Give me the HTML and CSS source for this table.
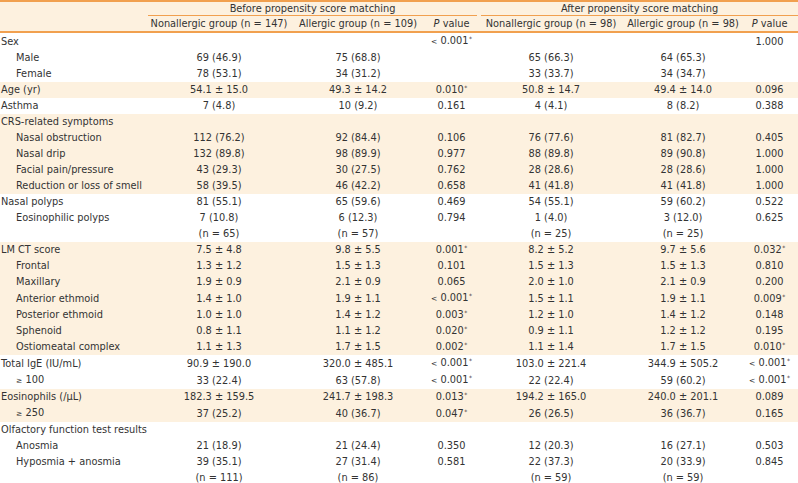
FILE: index.html
```html
<!DOCTYPE html>
<html>
<head>
<meta charset="utf-8">
<link rel="stylesheet" href="styles.css">
</head>
<body>
<table class="tbl">
  <colgroup>
    <col class="c-label"><col class="c-non"><col class="c-all"><col class="c-p">
    <col class="c-non2"><col class="c-all2"><col class="c-p2">
  </colgroup>
  <thead>
    <tr class="h1">
      <th class="corner" rowspan="2"></th>
      <th colspan="3"><div class="grp">Before propensity score matching</div></th>
      <th colspan="3"><div class="grp after">After propensity score matching</div></th>
    </tr>
    <tr class="h2">
      <th>Nonallergic group (n = 147)</th>
      <th>Allergic group (n = 109)</th>
      <th><i>P</i> value</th>
      <th>Nonallergic group (n = 98)</th>
      <th>Allergic group (n = 98)</th>
      <th><i>P</i> value</th>
    </tr>
  </thead>
  <tbody>
    <tr><td class="lb">Sex</td><td></td><td></td><td><span class="lt">&lt;</span> 0.001<sup>*</sup></td><td></td><td></td><td>1.000</td></tr>
    <tr><td class="lb in">Male</td><td>69 (46.9)</td><td>75 (68.8)</td><td></td><td>65 (66.3)</td><td>64 (65.3)</td><td></td></tr>
    <tr><td class="lb in">Female</td><td>78 (53.1)</td><td>34 (31.2)</td><td></td><td>33 (33.7)</td><td>34 (34.7)</td><td></td></tr>
    <tr class="hl"><td class="lb">Age (yr)</td><td>54.1 ± 15.0</td><td>49.3 ± 14.2</td><td>0.010<sup>*</sup></td><td>50.8 ± 14.7</td><td>49.4 ± 14.0</td><td>0.096</td></tr>
    <tr><td class="lb">Asthma</td><td>7 (4.8)</td><td>10 (9.2)</td><td>0.161</td><td>4 (4.1)</td><td>8 (8.2)</td><td>0.388</td></tr>
    <tr class="hl"><td class="lb">CRS-related symptoms</td><td></td><td></td><td></td><td></td><td></td><td></td></tr>
    <tr class="hl"><td class="lb in">Nasal obstruction</td><td>112 (76.2)</td><td>92 (84.4)</td><td>0.106</td><td>76 (77.6)</td><td>81 (82.7)</td><td>0.405</td></tr>
    <tr class="hl"><td class="lb in">Nasal drip</td><td>132 (89.8)</td><td>98 (89.9)</td><td>0.977</td><td>88 (89.8)</td><td>89 (90.8)</td><td>1.000</td></tr>
    <tr class="hl"><td class="lb in">Facial pain/pressure</td><td>43 (29.3)</td><td>30 (27.5)</td><td>0.762</td><td>28 (28.6)</td><td>28 (28.6)</td><td>1.000</td></tr>
    <tr class="hl"><td class="lb in">Reduction or loss of smell</td><td>58 (39.5)</td><td>46 (42.2)</td><td>0.658</td><td>41 (41.8)</td><td>41 (41.8)</td><td>1.000</td></tr>
    <tr><td class="lb">Nasal polyps</td><td>81 (55.1)</td><td>65 (59.6)</td><td>0.469</td><td>54 (55.1)</td><td>59 (60.2)</td><td>0.522</td></tr>
    <tr><td class="lb in">Eosinophilic polyps</td><td>7 (10.8)</td><td>6 (12.3)</td><td>0.794</td><td>1 (4.0)</td><td>3 (12.0)</td><td>0.625</td></tr>
    <tr><td class="lb"></td><td>(n = 65)</td><td>(n = 57)</td><td></td><td>(n = 25)</td><td>(n = 25)</td><td></td></tr>
    <tr class="hl"><td class="lb">LM CT score</td><td>7.5 ± 4.8</td><td>9.8 ± 5.5</td><td>0.001<sup>*</sup></td><td>8.2 ± 5.2</td><td>9.7 ± 5.6</td><td>0.032<sup>*</sup></td></tr>
    <tr class="hl"><td class="lb in">Frontal</td><td>1.3 ± 1.2</td><td>1.5 ± 1.3</td><td>0.101</td><td>1.5 ± 1.3</td><td>1.5 ± 1.3</td><td>0.810</td></tr>
    <tr class="hl"><td class="lb in">Maxillary</td><td>1.9 ± 0.9</td><td>2.1 ± 0.9</td><td>0.065</td><td>2.0 ± 1.0</td><td>2.1 ± 0.9</td><td>0.200</td></tr>
    <tr class="hl"><td class="lb in">Anterior ethmoid</td><td>1.4 ± 1.0</td><td>1.9 ± 1.1</td><td><span class="lt">&lt;</span> 0.001<sup>*</sup></td><td>1.5 ± 1.1</td><td>1.9 ± 1.1</td><td>0.009<sup>*</sup></td></tr>
    <tr class="hl"><td class="lb in">Posterior ethmoid</td><td>1.0 ± 1.0</td><td>1.4 ± 1.2</td><td>0.003<sup>*</sup></td><td>1.2 ± 1.0</td><td>1.4 ± 1.2</td><td>0.148</td></tr>
    <tr class="hl"><td class="lb in">Sphenoid</td><td>0.8 ± 1.1</td><td>1.1 ± 1.2</td><td>0.020<sup>*</sup></td><td>0.9 ± 1.1</td><td>1.2 ± 1.2</td><td>0.195</td></tr>
    <tr class="hl"><td class="lb in">Ostiomeatal complex</td><td>1.1 ± 1.3</td><td>1.7 ± 1.5</td><td>0.002<sup>*</sup></td><td>1.1 ± 1.4</td><td>1.7 ± 1.5</td><td>0.010<sup>*</sup></td></tr>
    <tr><td class="lb">Total IgE (IU/mL)</td><td>90.9 ± 190.0</td><td>320.0 ± 485.1</td><td><span class="lt">&lt;</span> 0.001<sup>*</sup></td><td>103.0 ± 221.4</td><td>344.9 ± 505.2</td><td><span class="lt">&lt;</span> 0.001<sup>*</sup></td></tr>
    <tr><td class="lb in"><span class="lt">≥</span> 100</td><td>33 (22.4)</td><td>63 (57.8)</td><td><span class="lt">&lt;</span> 0.001<sup>*</sup></td><td>22 (22.4)</td><td>59 (60.2)</td><td><span class="lt">&lt;</span> 0.001<sup>*</sup></td></tr>
    <tr class="hl"><td class="lb">Eosinophils (/μL)</td><td>182.3 ± 159.5</td><td>241.7 ± 198.3</td><td>0.013<sup>*</sup></td><td>194.2 ± 165.0</td><td>240.0 ± 201.1</td><td>0.089</td></tr>
    <tr class="hl"><td class="lb in"><span class="lt">≥</span> 250</td><td>37 (25.2)</td><td>40 (36.7)</td><td>0.047<sup>*</sup></td><td>26 (26.5)</td><td>36 (36.7)</td><td>0.165</td></tr>
    <tr><td class="lb">Olfactory function test results</td><td></td><td></td><td></td><td></td><td></td><td></td></tr>
    <tr><td class="lb in">Anosmia</td><td>21 (18.9)</td><td>21 (24.4)</td><td>0.350</td><td>12 (20.3)</td><td>16 (27.1)</td><td>0.503</td></tr>
    <tr><td class="lb in">Hyposmia + anosmia</td><td>39 (35.1)</td><td>27 (31.4)</td><td>0.581</td><td>22 (37.3)</td><td>20 (33.9)</td><td>0.845</td></tr>
    <tr class="last"><td class="lb"></td><td>(n = 111)</td><td>(n = 86)</td><td></td><td>(n = 59)</td><td>(n = 59)</td><td></td></tr>
  </tbody>
</table>
</body>
</html>
```

FILE: styles.css
```css
html, body {
  margin: 0;
  padding: 0;
  background: #ffffff;
}

body {
  font-family: "DejaVu Sans", "Liberation Sans", sans-serif;
  font-size: 9.8px;
  color: #333333;
}

.tbl {
  width: 798px;
  table-layout: fixed;
  border-collapse: separate;
  border-spacing: 0;
}

.c-label { width: 148px; }
.c-non   { width: 142px; }
.c-all   { width: 136px; }
.c-p     { width: 51px; }
.c-non2  { width: 148px; }
.c-all2  { width: 116px; }
.c-p2    { width: 57px; }

.tbl th {
  font-weight: normal;
  background: #fdf1df;
  padding: 0;
  white-space: nowrap;
  text-align: center;
}

.h1 th {
  border-top: 2px solid #f1a04f;
  line-height: 13px;
  height: 14px;
  vertical-align: bottom;
}

.h1 th.corner {
  border-bottom: 2px solid #f1a04f;
}

.grp {
  border-bottom: 1px solid #f1a04f;
  line-height: 13px;
}

.grp.after {
  margin-left: 4px;
}

.h2 th {
  line-height: 15px;
  height: 15px;
  border-bottom: 2px solid #f1a04f;
}

.tbl td {
  padding: 0;
  height: 16px;
  line-height: 16px;
  text-align: center;
  white-space: nowrap;
}

.tbl td.lb {
  text-align: left;
  padding-left: 1px;
}

.tbl td.lb.in {
  padding-left: 16px;
}

.hl td {
  background: #fdf1df;
}

.last td {
  border-bottom: 2px solid #f1a04f;
}

sup {
  font-size: 6px;
  line-height: 0;
  vertical-align: 3px;
  margin-left: 0.5px;
}

.lt {
  font-size: 7.5px;
}
```
